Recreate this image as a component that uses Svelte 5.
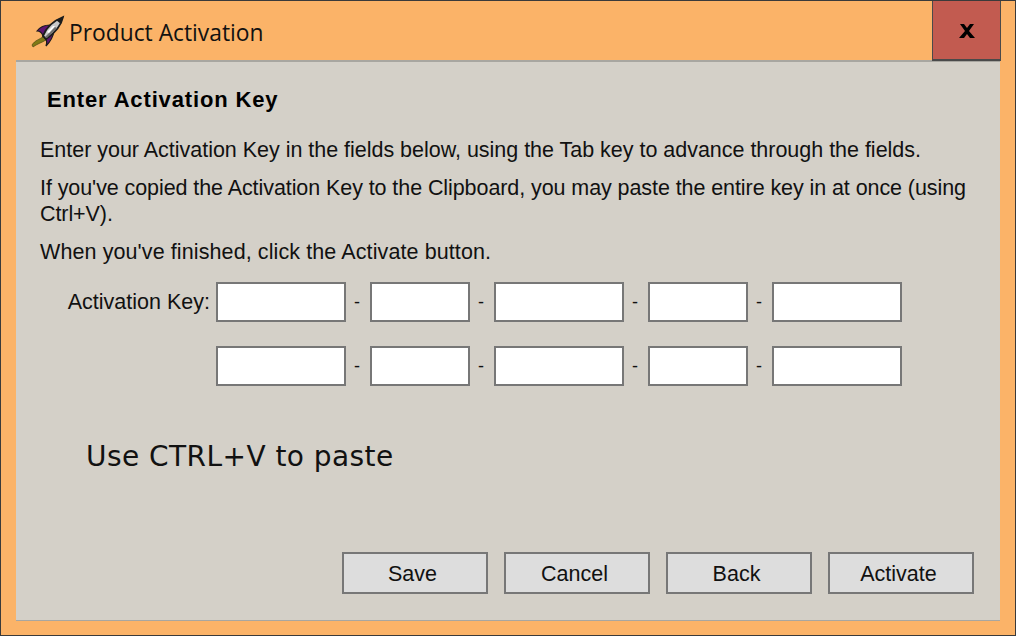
<script lang="ts">
  const keyRows = [
    [130, 100, 130, 100, 130],
    [130, 100, 130, 100, 130]
  ]
  const actions = ['Save', 'Cancel', 'Back', 'Activate']
</script>

<div class="window">
  <header class="titlebar">
    <svg class="app-icon" width="36" height="34" viewBox="0 0 36 34" aria-hidden="true">
      <path d="M2 30 C5 25 9 25 14 21 L16 25 C11 28 7 29 3 32 Z" fill="#7f7a16" stroke="#3c3a0c" stroke-width="0.6" />
      <path d="M7 16 C10 12 14 10 20 10 L13 21 C12 18 10 16 7 16 Z" fill="#5f1470" stroke="#1c1c1c" stroke-width="1.2" />
      <path d="M16 31 C19 28 23 23 24 16 L15 23 C17 25 17 28 16 31 Z" fill="#5f1470" stroke="#1c1c1c" stroke-width="1.2" />
      <path d="M13 21 C16 13 23 6 33 2 C31 11 25 18 16 24 Z" fill="#c9c9c9" stroke="#1c1c1c" stroke-width="1.8" />
      <path d="M26 5 L33 2 L31 9 Z" fill="#1c1c1c" />
      <path d="M15 22 L25 12 L27 13 L17 23 Z" fill="#6e6e6e" />
      <path d="M17 17 L23 11 L25 11 L19 18 Z" fill="#fff" />
    </svg>
    <span class="title">Product Activation</span>
    <button type="button" class="close" aria-label="close">
      <svg width="16" height="14" viewBox="0 0 16 14" aria-hidden="true">
        <path d="M1 0 H5 L8 4 L11 0 H15 L10 7 L16 14 H11 L8 10 L5 14 H0 L6 7 Z" fill="#000" />
      </svg>
    </button>
  </header>

  <main class="panel">
    <h1>Enter Activation Key</h1>
    <p class="first">Enter your Activation Key in the fields below, using the Tab key to advance through the fields.</p>
    <p class="second">If you've copied the Activation Key to the Clipboard, you may paste the entire key in at once (using Ctrl+V).</p>
    <p class="third">When you've finished, click the Activate button.</p>

    <div class="key-form">
      {#each keyRows as row, r}
        <div class="key-row">
          <label class="key-label" for="key-{r}-0">{r === 0 ? 'Activation Key:' : ''}</label>
          {#each row as width, i}
            <input id="key-{r}-{i}" type="text" style="width: {width}px" />
            {#if i < row.length - 1}<span class="dash">-</span>{/if}
          {/each}
        </div>
      {/each}
    </div>

    <div class="hint">Use CTRL+V to paste</div>

    <div class="actions">
      {#each actions as action}
        <button type="button" class="action">{action}</button>
      {/each}
    </div>
  </main>
</div>

<style>
  :global(body) {
    margin: 0;
  }

  .window {
    box-sizing: border-box;
    width: 1016px;
    height: 636px;
    display: flex;
    flex-direction: column;
    background: #fbb368;
    border: 1px solid #3a3a3a;
    overflow: hidden;
  }

  .titlebar {
    display: flex;
    align-items: center;
    height: 59px;
    flex-shrink: 0;
    padding-left: 29px;
  }

  .app-icon {
    flex-shrink: 0;
    margin-top: 2px;
  }

  .title {
    flex: 1;
    margin: 3px 0 0 3px;
    font-family: 'Open Sans', sans-serif;
    font-size: 22.8px;
    color: #111;
  }

  .close {
    position: relative;
    align-self: flex-start;
    width: 69px;
    height: 60px;
    margin-right: 14px;
    padding: 2px 0 0;
    display: flex;
    align-items: center;
    justify-content: center;
    background: #c25b50;
    border: 1px solid #4a4a4a;
    border-top: none;
    border-bottom-width: 2px;
  }

  .panel {
    flex: 1;
    margin: 0 15px 14px;
    display: flex;
    flex-direction: column;
    min-height: 0;
    background: #d4d0c8;
    border-top: 2px solid #a8a6a0;
    border-bottom: 1px solid #a8a6a0;
    font-family: 'Liberation Sans', Arial, sans-serif;
    font-size: 21.5px;
    color: #111;
  }

  h1 {
    margin: 24px 0 0 31px;
    font-size: 22px;
    line-height: 28px;
    font-weight: 700;
    letter-spacing: 0.85px;
    color: #000;
  }

  p {
    margin: 0 10px 0 24px;
    line-height: 26px;
  }

  .first {
    margin-top: 23px;
    letter-spacing: -0.02px;
  }

  .second {
    margin-top: 12px;
    margin-right: 24px;
    letter-spacing: -0.08px;
  }

  .third {
    margin-top: 12px;
    letter-spacing: 0.1px;
  }

  .key-form {
    display: flex;
    flex-direction: column;
    gap: 24px;
    margin-top: 17px;
  }

  .key-row {
    display: flex;
    align-items: center;
    height: 40px;
  }

  .key-label {
    box-sizing: border-box;
    width: 200px;
    padding-right: 6px;
    text-align: right;
  }

  input {
    box-sizing: border-box;
    height: 40px;
    margin: 0;
    padding: 0 4px;
    background: #fff;
    border: 2px solid #777;
    border-radius: 0;
    outline: none;
  }

  .dash {
    box-sizing: border-box;
    width: 24px;
    padding-right: 2px;
    text-align: center;
    font-size: 18px;
  }

  .hint {
    margin: 53px 0 0 70px;
    font-family: 'DejaVu Sans', Verdana, sans-serif;
    font-size: 28px;
    line-height: 36px;
    letter-spacing: 0.45px;
    color: #111;
  }

  .actions {
    display: flex;
    justify-content: flex-end;
    gap: 16px;
    margin-top: auto;
    padding: 0 26px 26px 0;
  }

  .action {
    box-sizing: border-box;
    width: 146px;
    height: 42px;
    padding: 2px 5px 0 0;
    background: #dddddd;
    border: 2px solid #777;
    border-radius: 0;
    font-family: inherit;
    font-size: 21.5px;
    color: #111;
  }
</style>
